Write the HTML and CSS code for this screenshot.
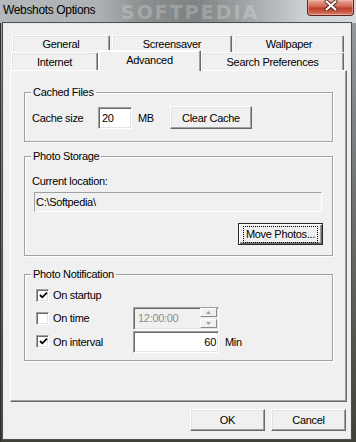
FILE: index.html
```html
<!DOCTYPE html>
<html>
<head>
<meta charset="utf-8">
<link rel="stylesheet" href="styles.css">
</head>
<body>
<div class="window">
  <div class="titlebar">
    <span class="title">Webshots Options</span>
    <span class="watermark">SOFTPEDIA</span>
    <span class="close">
      <svg width="14" height="11" viewBox="0 0 14 11">
        <path d="M2.5 1.5 L11.5 9.5 M11.5 1.5 L2.5 9.5" stroke="#4a2520" stroke-width="4" stroke-linecap="round"/>
        <path d="M2.5 1.5 L11.5 9.5 M11.5 1.5 L2.5 9.5" stroke="#ffffff" stroke-width="2.2" stroke-linecap="round"/>
      </svg>
    </span>
  </div>
  <div class="client">
    <div class="tabs">
      <div class="tabrow row1">
        <div class="tab t-general">General</div>
        <div class="tab t-screensaver">Screensaver</div>
        <div class="tab t-wallpaper">Wallpaper</div>
      </div>
      <div class="tabrow row2">
        <div class="tab t-internet">Internet</div>
        <div class="tab t-advanced">Advanced</div>
        <div class="tab t-search">Search Preferences</div>
      </div>
      <div class="panel">
        <div class="group g-cache">
          <div class="gtitle">Cached Files</div>
          <div class="row-cache">
            <span class="lbl-cache">Cache size</span>
            <span class="edit e-cache">20</span>
            <span class="lbl-mb">MB</span>
            <span class="btn b-clear">Clear Cache</span>
          </div>
        </div>
        <div class="group g-storage">
          <div class="gtitle">Photo Storage</div>
          <div class="lbl-loc">Current location:</div>
          <div class="locbox">C:\Softpedia\</div>
          <span class="btn btn-default b-move"><span class="focus">Move Photos...</span></span>
        </div>
        <div class="group g-notify">
          <div class="gtitle">Photo Notification</div>
          <div class="nrow nr1">
            <span class="cb"><svg width="9" height="9" viewBox="0 0 9 9"><path d="M1 4 L3.3 6.3 L8 1.6" fill="none" stroke="#000" stroke-width="1.8"/></svg></span>
            <span class="cblbl">On startup</span>
          </div>
          <div class="nrow nr2">
            <span class="cb"></span>
            <span class="cblbl">On time</span>
            <span class="edit e-time">
              <span class="timetxt">12:00:00</span>
              <span class="spin">
                <span class="spinbtn"><svg width="5" height="3" viewBox="0 0 5 3"><path d="M0 3 L2.5 0 L5 3Z" fill="#a0a0a0"/></svg></span>
                <span class="spinbtn"><svg width="5" height="3" viewBox="0 0 5 3"><path d="M0 0 L2.5 3 L5 0Z" fill="#a0a0a0"/></svg></span>
              </span>
            </span>
          </div>
          <div class="nrow nr3">
            <span class="cb"><svg width="9" height="9" viewBox="0 0 9 9"><path d="M1 4 L3.3 6.3 L8 1.6" fill="none" stroke="#000" stroke-width="1.8"/></svg></span>
            <span class="cblbl">On interval</span>
            <span class="edit e-interval">60</span>
            <span class="lbl-min">Min</span>
          </div>
        </div>
      </div>
      <div class="footer">
        <span class="btn b-dlg">OK</span>
        <span class="btn b-dlg">Cancel</span>
      </div>
    </div>
  </div>
</div>
</body>
</html>
```
FILE: styles.css
```css
* { box-sizing: border-box; }
html, body { margin: 0; padding: 0; }
body {
  width: 356px;
  height: 442px;
  overflow: hidden;
  font-family: "Liberation Sans", Arial, sans-serif;
  font-size: 11px;
  letter-spacing: -0.3px;
  color: #000;
  background: #3e413a;
}
.window {
  width: 356px;
  height: 442px;
  display: flex;
  flex-direction: column;
  position: relative;
  background: linear-gradient(180deg, #9a9ea2 0%, #7d8082 30%, #5a5c55 70%, #3f4236 100%);
  border-left: 1px solid #2e302a;
}
.titlebar {
  height: 23px;
  display: flex;
  align-items: flex-start;
  justify-content: space-between;
  padding-left: 3px;
  margin-left: -1px;
  background: linear-gradient(90deg, #b4b8bb 0%, #aeb1b3 28%, #8c8f90 40%, #7f8283 55%, #a9acae 72%, #cdd0d2 85%, #d7dadc 100%);
}
.title {
  font-size: 12px;
  letter-spacing: -0.35px;
  line-height: 14px;
  margin-top: 3px;
  color: #000;
}
.watermark {
  position: absolute;
  left: 120px;
  top: 2px;
  line-height: 20px;
  font-family: "DejaVu Sans", sans-serif;
  font-weight: bold;
  font-size: 19px;
  letter-spacing: 2px;
  color: rgba(255, 255, 255, 0.22);
  pointer-events: none;
}
.close {
  width: 47px;
  height: 16px;
  margin-right: 2px;
  border: 1px solid #5b2620;
  border-top: none;
  border-radius: 0 0 4px 4px;
  background: linear-gradient(180deg, #e7a596 0%, #d46c5a 40%, #c0402b 55%, #c95a45 80%, #e08a74 100%);
  display: flex;
  align-items: flex-start;
  justify-content: center;
  box-shadow: inset 0 0 0 1px rgba(255, 200, 190, 0.5);
}
.client {
  margin-left: 2px;
  width: 348px;
  height: 416px;
  background: #f0f0f0;
  border: 1px solid #eaeaea;
  box-shadow: 0 0 0 1px #4d5052;
  padding: 11px 0 0 6px;
}
.tabs {
  width: 337px;
  display: flex;
  flex-direction: column;
}
.tabrow {
  display: flex;
}
.row1 {
  height: 17px;
  margin-left: 2px;
  gap: 2px;
}
.row2 {
  height: 18px;
  margin-left: 1px;
  align-items: flex-end;
}
.tab {
  display: flex;
  align-items: center;
  justify-content: center;
  background: #f0f0f0;
  border-top: 1px solid #ffffff;
  border-left: 1px solid #ffffff;
  border-right: 1px solid #696969;
  border-radius: 2px 2px 0 0;
  box-shadow: inset -1px 0 #a0a0a0, inset 1px 1px #e3e3e3;
  height: 100%;
}
.row2 .tab { padding-top: 1px; }
.t-general { width: 98px; }
.t-screensaver { width: 120px; }
.t-wallpaper { width: 110px; }
.t-internet { width: 87px; }
.t-search { width: 143px; }
.row2 .t-advanced {
  width: 103px;
  height: 21px;
  margin-bottom: -1px;
  position: relative;
  z-index: 1;
  padding-top: 0;
  padding-bottom: 2px;
  box-shadow: inset -1px 0 #a0a0a0, inset 1px 1px #ffffff;
}
.panel {
  width: 337px;
  height: 332px;
  border-top: 1px solid #ffffff;
  border-left: 1px solid #ffffff;
  border-right: 1px solid #696969;
  border-bottom: 1px solid #696969;
  box-shadow: inset -1px -1px #a0a0a0;
  padding: 21px 13px 0 13px;
  display: flex;
  flex-direction: column;
}
.group {
  width: 309px;
  border: 1px solid #a0a0a0;
  box-shadow: inset 1px 1px #ffffff, 1px 1px #ffffff;
  display: flex;
  flex-direction: column;
}
.gtitle {
  align-self: flex-start;
  margin: -7px 0 0 6px;
  padding: 0 2px;
  line-height: 13px;
  background: #f0f0f0;
}
.g-cache { padding-bottom: 12px; }
.g-storage { margin-top: 14px; padding-bottom: 10px; }
.g-notify { margin-top: 18px; padding-bottom: 7px; }

.row-cache {
  display: flex;
  align-items: center;
  height: 23px;
  margin-top: 7px;
  padding-left: 7px;
}
.lbl-cache { width: 66px; }
.edit {
  background: #ffffff;
  border: 1px solid;
  border-color: #a0a0a0 #ffffff #ffffff #a0a0a0;
  box-shadow: inset 1px 1px #696969, inset -1px -1px #e3e3e3;
  display: flex;
  align-items: center;
}
.e-cache {
  width: 34px;
  height: 22px;
  padding-left: 3px;
}
.lbl-mb { width: 32px; margin-left: 6px; }
.btn {
  display: flex;
  align-items: center;
  justify-content: center;
  background: #f0f0f0;
  border: 1px solid;
  border-color: #ffffff #696969 #696969 #ffffff;
  box-shadow: inset -1px -1px #a0a0a0, inset 1px 1px #e3e3e3;
}
.b-clear { width: 82px; height: 23px; }

.lbl-loc {
  margin-top: 12px;
  padding-left: 7px;
  line-height: 13px;
}
.locbox {
  margin: 4px 0 0 9px;
  width: 288px;
  height: 20px;
  border: 1px solid;
  border-color: #a0a0a0 #ffffff #ffffff #a0a0a0;
  padding-left: 1px;
  display: flex;
  align-items: center;
}
.b-move {
  align-self: flex-end;
  margin: 11px 9px 0 0;
  width: 85px;
  height: 22px;
}
.btn-default {
  border: 1px solid #2a2a2a;
  box-shadow: inset 1px 1px #ffffff, inset -1px -1px #696969, inset -2px -2px #a0a0a0;
}
.focus {
  border: 1px dotted #000;
  padding: 1px 2px 1px 2px;
  line-height: 13px;
}

.nrow {
  display: flex;
  align-items: center;
  padding-left: 11px;
}
.nr1 { margin-top: 3px; height: 22px; }
.nr2 { height: 24px; }
.nr3 { height: 23px; }
.cb {
  width: 13px;
  height: 13px;
  background: #ffffff;
  border: 1px solid;
  border-color: #a0a0a0 #ffffff #ffffff #a0a0a0;
  box-shadow: inset 1px 1px #696969, inset -1px -1px #e3e3e3;
  display: flex;
  align-items: center;
  justify-content: center;
  padding-left: 1px;
}
.cblbl {
  width: 80px;
  margin-left: 4px;
}
.e-time {
  width: 86px;
  height: 23px;
  background: #f0f0f0;
  padding: 2px 1px 2px 4px;
  justify-content: space-between;
}
.timetxt { color: #8d8d8d; }
.spin {
  display: flex;
  flex-direction: column;
  gap: 2px;
  width: 17px;
}
.spinbtn {
  height: 9px;
  display: flex;
  align-items: center;
  justify-content: center;
  background: #f0f0f0;
  border: 1px solid;
  border-color: #ffffff #8a8a8a #8a8a8a #ffffff;
}
.e-interval {
  width: 86px;
  height: 22px;
  justify-content: flex-end;
  padding-right: 2px;
}
.lbl-min { margin-left: 6px; }

.footer {
  display: flex;
  justify-content: flex-end;
  gap: 6px;
  margin-top: 7px;
  padding-right: 1px;
}
.b-dlg { width: 75px; height: 22px; }
```
